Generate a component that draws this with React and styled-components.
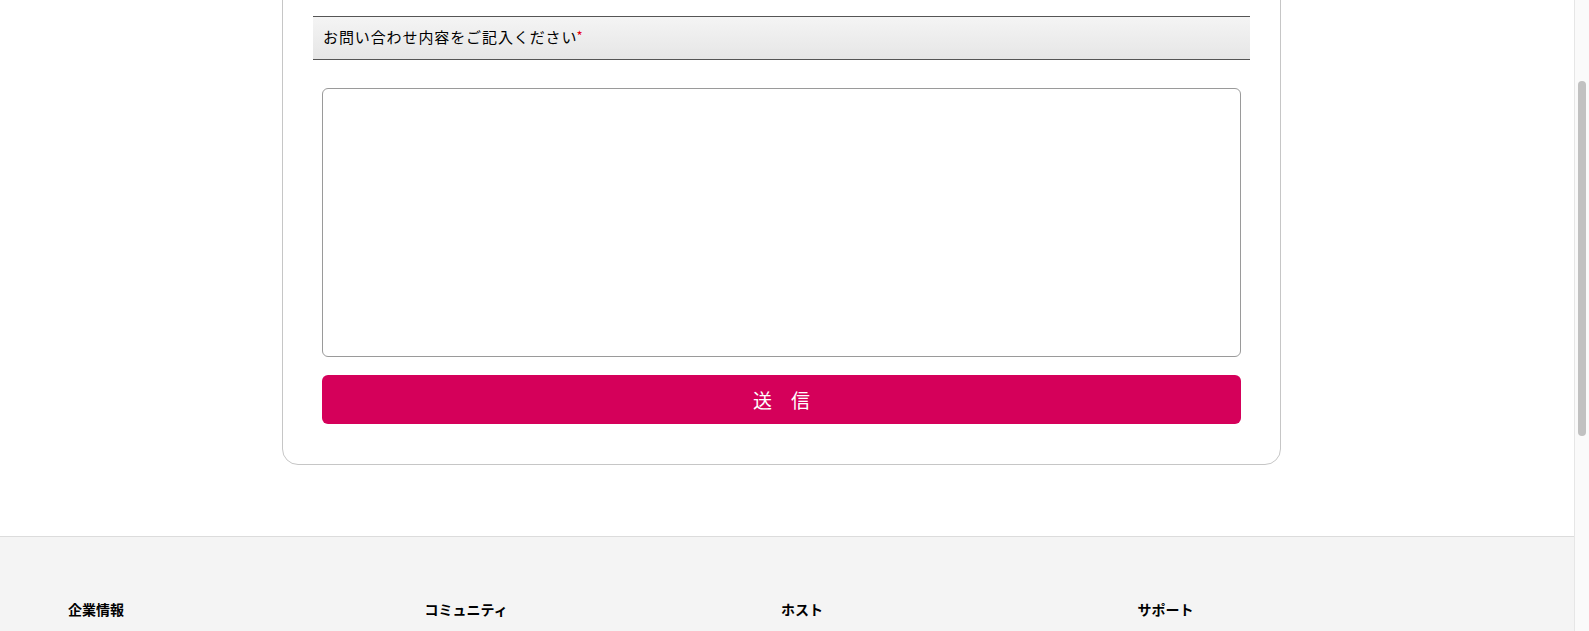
import React from 'react';
import styled, { createGlobalStyle } from 'styled-components';

const GlobalStyle = createGlobalStyle`
  html, body {
    margin: 0;
    padding: 0;
    height: 631px;
    overflow: hidden;
    background: #fff;
  }
  body {
    font-family: "Noto Sans CJK JP", "Noto Sans", sans-serif;
    color: #111;
  }
`;

const Frame = styled.div`
  display: flex;
  height: 631px;
`;

const Page = styled.div`
  flex: 1;
  display: flex;
  flex-direction: column;
  overflow: hidden;
`;

const Main = styled.main`
  padding-left: 282px;
  padding-bottom: 71px;
`;

const Card = styled.section`
  box-sizing: border-box;
  width: 999px;
  margin-top: -20px;
  padding: 35px 30px 40px;
  border: 1px solid #c6c6c6;
  border-radius: 16px;
`;

const FieldHead = styled.div`
  box-sizing: border-box;
  height: 44px;
  display: flex;
  align-items: center;
  padding: 0 10px 4px;
  border-top: 1px solid #555;
  border-bottom: 1px solid #555;
  background: linear-gradient(#f4f4f4, #e6e6e6);
  font-size: 15px;
  letter-spacing: 0.9px;
  color: #000;
`;

const Required = styled.span`
  color: #e60012;
  font-size: 13px;
  margin-left: -1px;
  align-self: flex-start;
  margin-top: 9px;
`;

const FieldBody = styled.div`
  padding: 28px 9px 0;
  display: flex;
  flex-direction: column;
  gap: 18px;
`;

const TextArea = styled.textarea`
  box-sizing: border-box;
  display: block;
  width: 100%;
  height: 269px;
  border: 1px solid #9a9a9a;
  border-radius: 6px;
  resize: none;
  outline: none;
  font-family: inherit;
  font-size: 15px;
  padding: 8px;
`;

const SubmitButton = styled.button`
  height: 49px;
  width: 100%;
  border: none;
  border-radius: 6px;
  background: #d5005a;
  color: #fff;
  font-family: "Noto Sans CJK JP", sans-serif;
  font-size: 19px;
  cursor: pointer;
`;

const Footer = styled.footer`
  flex: 1;
  background: #f4f4f4;
  border-top: 1px solid #dcdcdc;
  padding: 62px 0 0 68px;
`;

const FooterCols = styled.div`
  display: grid;
  grid-template-columns: repeat(4, 356.5px);
`;

const FooterHeading = styled.h3`
  margin: 0;
  font-size: 14px;
  font-weight: 700;
  color: #000;
`;

const ScrollTrack = styled.div`
  box-sizing: border-box;
  width: 15px;
  height: 631px;
  background: #fafafa;
  border-left: 1px solid #e6e6e6;
  padding: 81px 3px 0 3px;
`;

const ScrollThumb = styled.div`
  width: 8px;
  height: 355px;
  border-radius: 4px;
  background: #c1c1c1;
`;

const footerSections = ['企業情報', 'コミュニティ', 'ホスト', 'サポート'];

export default function App() {
  return (
    <Frame>
      <GlobalStyle />
      <Page>
        <Main>
          <Card>
            <FieldHead>
              お問い合わせ内容をご記入ください<Required>*</Required>
            </FieldHead>
            <FieldBody>
              <TextArea />
              <SubmitButton type="button">送　信</SubmitButton>
            </FieldBody>
          </Card>
        </Main>
        <Footer>
          <FooterCols>
            {footerSections.map(name => (
              <FooterHeading key={name}>{name}</FooterHeading>
            ))}
          </FooterCols>
        </Footer>
      </Page>
      <ScrollTrack>
        <ScrollThumb />
      </ScrollTrack>
    </Frame>
  );
}
